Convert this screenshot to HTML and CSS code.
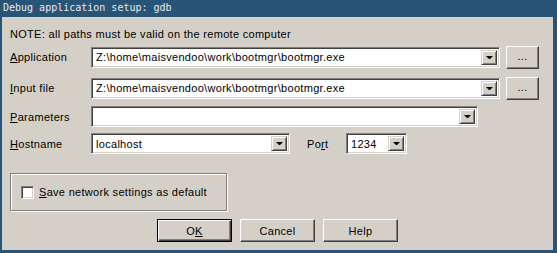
FILE: index.html
```html
<!DOCTYPE html>
<html lang="en">
<head>
    <meta charset="UTF-8">
    <title>Debug application setup: gdb</title>
    <link rel="stylesheet" href="styles.css">
</head>
<body>
    <div class="window">
        <div class="titlebar">Debug application setup: gdb</div>
        <div class="client">
            <div class="note">NOTE: all paths must be valid on the remote computer</div>

            <div class="row row-app">
                <label class="label"><u>A</u>pplication</label>
                <div class="combo combo-path">
                    <span class="combo-text">Z:\home\maisvendoo\work\bootmgr\bootmgr.exe</span>
                    <span class="arrow"></span>
                </div>
                <button class="btn btn-browse">...</button>
            </div>

            <div class="row row-input">
                <label class="label"><u>I</u>nput file</label>
                <div class="combo combo-path">
                    <span class="combo-text">Z:\home\maisvendoo\work\bootmgr\bootmgr.exe</span>
                    <span class="arrow"></span>
                </div>
                <button class="btn btn-browse">...</button>
            </div>

            <div class="row row-params">
                <label class="label"><u>P</u>arameters</label>
                <div class="combo combo-params">
                    <span class="combo-text"></span>
                    <span class="arrow"></span>
                </div>
            </div>

            <div class="row row-host">
                <label class="label"><u>H</u>ostname</label>
                <div class="combo combo-host">
                    <span class="combo-text">localhost</span>
                    <span class="arrow"></span>
                </div>
                <label class="port-label">Po<u>r</u>t</label>
                <div class="combo combo-port">
                    <span class="combo-text">1234</span>
                    <span class="arrow"></span>
                </div>
            </div>

            <div class="groupbox">
                <span class="checkbox"></span>
                <span><u>S</u>ave network settings as default</span>
            </div>

            <div class="buttons">
                <button class="btn btn-default">O<u>K</u></button>
                <button class="btn">Cancel</button>
                <button class="btn">Help</button>
            </div>
        </div>
    </div>
</body>
</html>
```

FILE: styles.css
```css
body {
    margin: 0;
    background: #285577;
    font-family: 'Liberation Sans', Arial, sans-serif;
    font-size: 11px;
    letter-spacing: 0.3px;
    color: #000;
}

.window {
    width: 557px;
    height: 253px;
    box-sizing: border-box;
    padding: 0 4px 3px 2px;
    display: flex;
    flex-direction: column;
}

.titlebar {
    height: 17px;
    line-height: 16px;
    font-family: 'DejaVu Sans Mono', monospace;
    font-size: 10px;
    letter-spacing: 0;
    color: #e8e8ee;
    padding-left: 1px;
}

.client {
    flex: 1;
    background: #d4d0c8;
    padding: 0 0 0 8px;
}

.note {
    margin-top: 11px;
    height: 13px;
    line-height: 13px;
}

.row {
    display: flex;
    align-items: center;
}

.row-app { margin-top: 5px; height: 22px; }
.row-input { margin-top: 9px; height: 22px; }
.row-params { margin-top: 7px; height: 21px; }
.row-host { margin-top: 6px; height: 21px; }

.label {
    width: 81px;
    flex-shrink: 0;
}

.combo {
    height: 21px;
    box-sizing: border-box;
    background: #fff;
    border-top: 1px solid #808080;
    border-left: 1px solid #808080;
    border-right: 1px solid #fff;
    border-bottom: 1px solid #fff;
    box-shadow: inset 1px 1px 0 #404040, inset -1px -1px 0 #d4d0c8;
    display: flex;
    align-items: center;
    padding: 2px 2px 2px 3px;
}

.combo-text {
    flex: 1;
    padding-left: 1px;
    white-space: nowrap;
    overflow: hidden;
}

.arrow {
    width: 16px;
    height: 15px;
    box-sizing: border-box;
    background: #d4d0c8;
    border-top: 1px solid #d4d0c8;
    border-left: 1px solid #d4d0c8;
    border-right: 1px solid #404040;
    border-bottom: 1px solid #404040;
    box-shadow: inset 1px 1px 0 #fff, inset -1px -1px 0 #808080;
    position: relative;
}

.arrow::after {
    content: "";
    position: absolute;
    left: 4px;
    top: 5px;
    border-left: 3px solid transparent;
    border-right: 3px solid transparent;
    border-top: 3px solid #000;
    width: 1px;
}

.combo-path { width: 409px; }
.combo-params { width: 387px; }
.combo-host { width: 199px; }
.combo-port { width: 61px; }

.port-label {
    margin-left: 17px;
    width: 39px;
}

.btn {
    font-family: inherit;
    font-size: 11px;
    letter-spacing: 0.3px;
    color: #000;
    background: #d4d0c8;
    height: 23px;
    box-sizing: border-box;
    border-top: 1px solid #fff;
    border-left: 1px solid #fff;
    border-right: 1px solid #404040;
    border-bottom: 1px solid #404040;
    box-shadow: inset -1px -1px 0 #808080;
    padding: 0;
}

.btn-browse {
    width: 33px;
    margin-left: 6px;
    padding-bottom: 2px;
}

.groupbox {
    margin-top: 19px;
    width: 217px;
    height: 38px;
    box-sizing: border-box;
    border: 1px solid #808080;
    box-shadow: 1px 1px 0 #fff, inset 1px 1px 0 #fff;
    display: flex;
    align-items: center;
    padding-left: 10px;
    gap: 5px;
}

.checkbox {
    width: 13px;
    height: 13px;
    box-sizing: border-box;
    background: #fff;
    border-top: 1px solid #808080;
    border-left: 1px solid #808080;
    border-right: 1px solid #fff;
    border-bottom: 1px solid #fff;
    box-shadow: inset 1px 1px 0 #404040, inset -1px -1px 0 #d4d0c8;
}

.buttons {
    margin-top: 8px;
    margin-left: 147px;
    display: flex;
    gap: 8px;
}

.buttons .btn {
    width: 75px;
}

.btn-default {
    border: 1px solid #000;
    box-shadow: inset 1px 1px 0 #fff, inset -1px -1px 0 #404040, inset -2px -2px 0 #808080;
}
```
